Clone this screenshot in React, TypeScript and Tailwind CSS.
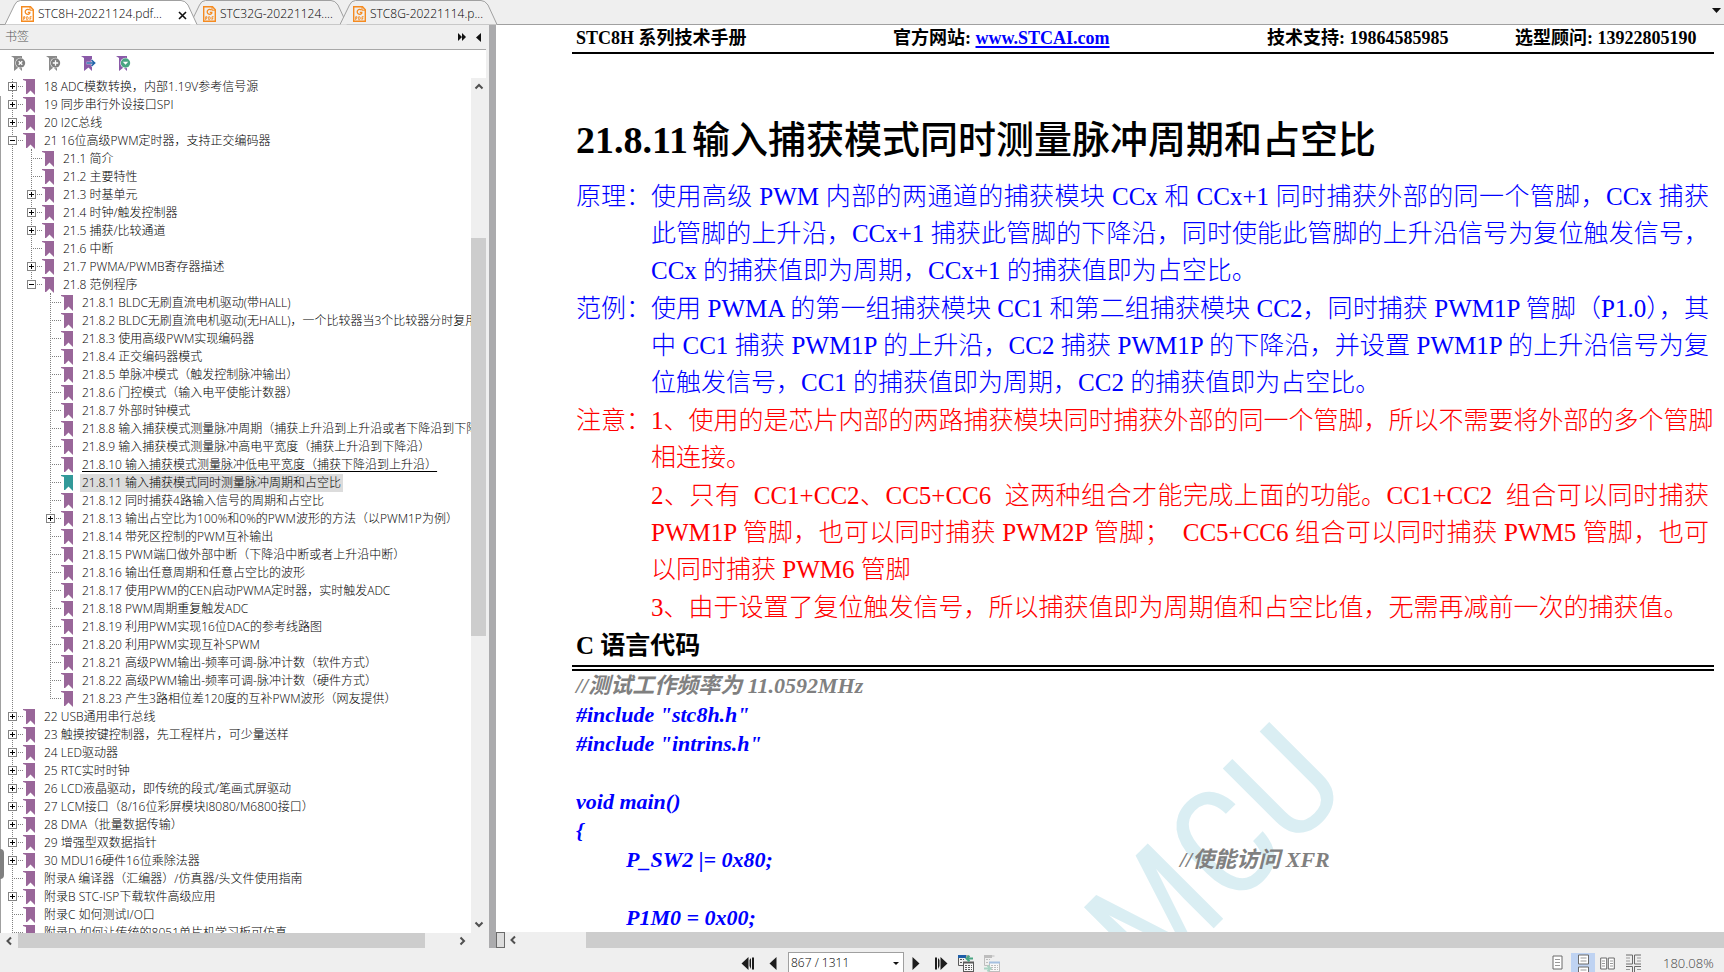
import { useState } from "react";
import clsx from "clsx";

type Bookmark = {
  title: string;
  level: number;
  toggle?: "plus" | "minus";
  state?: "active" | "hover";
  lastChild?: boolean;
};

const BOOKMARKS: Bookmark[] = [
  { title: "18 ADC模数转换，内部1.19V参考信号源", level: 0, toggle: "plus" },
  { title: "19 同步串行外设接口SPI", level: 0, toggle: "plus" },
  { title: "20 I2C总线", level: 0, toggle: "plus" },
  { title: "21 16位高级PWM定时器，支持正交编码器", level: 0, toggle: "minus" },
  { title: "21.1 简介", level: 1 },
  { title: "21.2 主要特性", level: 1 },
  { title: "21.3 时基单元", level: 1, toggle: "plus" },
  { title: "21.4 时钟/触发控制器", level: 1, toggle: "plus" },
  { title: "21.5 捕获/比较通道", level: 1, toggle: "plus" },
  { title: "21.6 中断", level: 1 },
  { title: "21.7 PWMA/PWMB寄存器描述", level: 1, toggle: "plus" },
  { title: "21.8 范例程序", level: 1, toggle: "minus", lastChild: true },
  { title: "21.8.1 BLDC无刷直流电机驱动(带HALL)", level: 2 },
  { title: "21.8.2 BLDC无刷直流电机驱动(无HALL)，一个比较器当3个比较器分时复用", level: 2 },
  { title: "21.8.3 使用高级PWM实现编码器", level: 2 },
  { title: "21.8.4 正交编码器模式", level: 2 },
  { title: "21.8.5 单脉冲模式（触发控制脉冲输出）", level: 2 },
  { title: "21.8.6 门控模式（输入电平使能计数器）", level: 2 },
  { title: "21.8.7 外部时钟模式", level: 2 },
  { title: "21.8.8 输入捕获模式测量脉冲周期（捕获上升沿到上升沿或者下降沿到下降沿）", level: 2 },
  { title: "21.8.9 输入捕获模式测量脉冲高电平宽度（捕获上升沿到下降沿）", level: 2 },
  { title: "21.8.10 输入捕获模式测量脉冲低电平宽度（捕获下降沿到上升沿）", level: 2, state: "hover" },
  { title: "21.8.11 输入捕获模式同时测量脉冲周期和占空比", level: 2, state: "active" },
  { title: "21.8.12 同时捕获4路输入信号的周期和占空比", level: 2 },
  { title: "21.8.13 输出占空比为100%和0%的PWM波形的方法（以PWM1P为例）", level: 2, toggle: "plus" },
  { title: "21.8.14 带死区控制的PWM互补输出", level: 2 },
  { title: "21.8.15 PWM端口做外部中断（下降沿中断或者上升沿中断）", level: 2 },
  { title: "21.8.16 输出任意周期和任意占空比的波形", level: 2 },
  { title: "21.8.17 使用PWM的CEN启动PWMA定时器，实时触发ADC", level: 2 },
  { title: "21.8.18 PWM周期重复触发ADC", level: 2 },
  { title: "21.8.19 利用PWM实现16位DAC的参考线路图", level: 2 },
  { title: "21.8.20 利用PWM实现互补SPWM", level: 2 },
  { title: "21.8.21 高级PWM输出-频率可调-脉冲计数（软件方式）", level: 2 },
  { title: "21.8.22 高级PWM输出-频率可调-脉冲计数（硬件方式）", level: 2 },
  { title: "21.8.23 产生3路相位差120度的互补PWM波形（网友提供）", level: 2, lastChild: true },
  { title: "22 USB通用串行总线", level: 0, toggle: "plus" },
  { title: "23 触摸按键控制器，先工程样片，可少量送样", level: 0, toggle: "plus" },
  { title: "24 LED驱动器", level: 0, toggle: "plus" },
  { title: "25 RTC实时时钟", level: 0, toggle: "plus" },
  { title: "26 LCD液晶驱动，即传统的段式/笔画式屏驱动", level: 0, toggle: "plus" },
  { title: "27 LCM接口（8/16位彩屏模块I8080/M6800接口）", level: 0, toggle: "plus" },
  { title: "28 DMA（批量数据传输）", level: 0, toggle: "plus" },
  { title: "29 增强型双数据指针", level: 0, toggle: "plus" },
  { title: "30 MDU16硬件16位乘除法器", level: 0, toggle: "plus" },
  { title: "附录A 编译器（汇编器）/仿真器/头文件使用指南", level: 0 },
  { title: "附录B STC-ISP下载软件高级应用", level: 0, toggle: "plus" },
  { title: "附录C 如何测试I/O口", level: 0 },
  { title: "附录D 如何让传统的8051单片机学习板可仿真", level: 0 },
];

const TABS = [
  { title: "STC8H-20221124.pdf...", active: true },
  { title: "STC32G-20221124....", active: false },
  { title: "STC8G-20221114.p...", active: false },
];

const NOTES = [
  {
    label: "原理：",
    color: "text-[#0000ff]",
    lines: [
      "使用高级 PWM 内部的两通道的捕获模块 CCx 和 CCx+1 同时捕获外部的同一个管脚，CCx 捕获",
      "此管脚的上升沿，CCx+1 捕获此管脚的下降沿，同时使能此管脚的上升沿信号为复位触发信号，",
      "CCx 的捕获值即为周期，CCx+1 的捕获值即为占空比。",
    ],
  },
  {
    label: "范例：",
    color: "text-[#0000ff]",
    lines: [
      "使用 PWMA 的第一组捕获模块 CC1 和第二组捕获模块 CC2，同时捕获 PWM1P 管脚（P1.0），其",
      "中 CC1 捕获 PWM1P 的上升沿，CC2 捕获 PWM1P 的下降沿，并设置 PWM1P 的上升沿信号为复",
      "位触发信号，CC1 的捕获值即为周期，CC2 的捕获值即为占空比。",
    ],
  },
  {
    label: "注意：",
    color: "text-[#ff0000]",
    lines: ["1、使用的是芯片内部的两路捕获模块同时捕获外部的同一个管脚，所以不需要将外部的多个管脚", "相连接。"],
  },
  {
    label: "",
    color: "text-[#ff0000]",
    lines: [
      "2、只有\u00a0 CC1+CC2、CC5+CC6\u00a0 这两种组合才能完成上面的功能。CC1+CC2\u00a0 组合可以同时捕获",
      "PWM1P 管脚，也可以同时捕获 PWM2P 管脚；\u00a0 CC5+CC6 组合可以同时捕获 PWM5 管脚，也可",
      "以同时捕获 PWM6 管脚",
    ],
  },
  {
    label: "",
    color: "text-[#ff0000]",
    lines: ["3、由于设置了复位触发信号，所以捕获值即为周期值和占空比值，无需再减前一次的捕获值。"],
  },
];

const CODE: { code?: string; comment?: string; indent?: boolean }[] = [
  { comment: "//测试工作频率为 11.0592MHz" },
  { code: '#include "stc8h.h"' },
  { code: '#include "intrins.h"' },
  {},
  { code: "void main()" },
  { code: "{" },
  { code: "P_SW2 |= 0x80;", comment: "//使能访问 XFR", indent: true },
  {},
  { code: "P1M0 = 0x00;", indent: true },
];

function Chevron({ dir }: { dir: "up" | "down" | "left" | "right" }) {
  const d = {
    up: "M1.5 7.5 5 4l3.500 3.500",
    down: "M1.500 3.500 5 7l3.500-3.500",
    left: "M7 1.500 3.500 5 7 8.500",
    right: "M3.500 1.500 7 5 3.500 8.500",
  }[dir];
  return (
    <svg viewBox="0 0 10 10" className="size-[10px]" fill="none" stroke="#505050" strokeWidth="2">
      <path d={d} />
    </svg>
  );
}

function PdfIcon() {
  return (
    <svg viewBox="0 0 13 16" className="h-4 w-[13px] shrink-0" fill="none" stroke="#f58a1f">
      <path d="M.7.7h8.800l2.800 3v11.600H.7z" strokeWidth="1.400" />
      <path d="M9 .5v3.700h3.500" strokeWidth="1" />
      <path d="M8.600 4.200A2.500 2.500 0 1 0 8.800 7.200V6.300H6.800" strokeWidth="1.300" />
      <path d="M2.700 14V10.700h1.200v1.600H2.700M5.700 10.700v3h.8c1 0 1-3 0-3zM9 14v-3.300h1.600M9 12.300h1.300" strokeWidth=".9" />
    </svg>
  );
}

function Tab({ title, active }: { title: string; active: boolean }) {
  const w = active ? 193 : 158;
  return (
    <div className={clsx("relative flex h-[25px] items-center", active ? "z-10 ml-[5px] w-[193px]" : "-ml-2 w-[158px]")}>
      <svg viewBox={`0 0 ${w} 25`} className="absolute inset-0 size-full" stroke="#a0a0a0">
        <path
          d={`M0 24.500 9.500 5Q11.500 .5 15.500 .5H${w - 17}Q${w - 13} .5 ${w - 10} 5L${w - 1} 24.500`}
          fill={active ? "#ffffff" : "#efefef"}
        />
      </svg>
      <button type="button" className={clsx("relative flex items-center gap-1 pt-1", active ? "pl-4" : "pl-[13px]")}>
        <PdfIcon />
        <span className="whitespace-nowrap leading-4">{title}</span>
      </button>
      {active && (
        <button type="button" aria-label="关闭" className="absolute right-[11px] top-[11px]">
          <svg viewBox="0 0 9 9" className="size-[9px]" stroke="#111" strokeWidth="1.600">
            <path d="M1 1l7 7M8 1 1 8" />
          </svg>
        </button>
      )}
    </div>
  );
}

/* Connector lines, expander box and ribbon in front of a bookmark */
function Gutter({ item, index }: { item: Bookmark; index: number }) {
  const { level, toggle, lastChild, state } = item;
  const w = 42 + level * 19;
  const x = 12 + level * 19;
  const open = toggle === "minus";
  return (
    <svg viewBox={`0 0 ${w} 18`} width={w} height={18} className="shrink-0" shapeRendering="crispEdges">
      <g stroke="#808080" strokeDasharray="1 1">
        {level > 0 && <path d="M12.500 0v18" />}
        <path d={`M${x + 0.5} ${index === 0 ? 1 : 0}V${lastChild ? 9 : 18}`} />
        <path d={`M${x} 8.500h${12}`} />
        {open && <path d={`M${x + 19.5} 17v2`} />}
      </g>
      {toggle && (
        <g>
          <rect x={x - 3.5} y="4.500" width="8" height="8" fill="#fff" stroke="#848484" />
          <path d={`M${x - 2} 8.500h5`} stroke="#000" />
          {!open && <path d={`M${x + 0.5} 6v5`} stroke="#000" />}
        </g>
      )}
      <path
        d={`M${x + 11} 1h12v16l-1-1-3.500-3.500-3.500 3.500h-1V3l-3-1z`}
        fill={state === "active" ? "#329999" : "#996699"}
        shapeRendering="auto"
      />
    </svg>
  );
}

function ToolIcon({ kind, label }: { kind: "close" | "add" | "goto" | "menu"; label: string }) {
  const gray = kind === "close" || kind === "add";
  return (
    <button type="button" aria-label={label}>
      <svg viewBox="0 0 15 17" className="h-[17px] w-[15px]">
        <path d="M0 1h11v15l-3.500-3.500L3 16V3L0 1z" fill={gray ? "#8a8a8a" : "#8a5aa8"} />
        {kind === "goto" ? (
          <path d="M5.500 8h8M10.500 4.500 14 8l-3.500 3.500" fill="none" stroke="#fff" strokeWidth="2.500" />
        ) : (
          <circle cx="9.500" cy="8" r="5.200" fill="#fff" />
        )}
        {kind === "goto" && <path d="M5.500 8h8M10.500 5 13.700 8l-3.200 3" fill="none" stroke="#1f62a8" strokeWidth="1.500" />}
        {gray && <circle cx="9.500" cy="8" r="4.700" fill="#808080" />}
        {kind === "close" && <path d="M7.700 6.200l3.600 3.600M11.300 6.200 7.700 9.800" stroke="#fff" strokeWidth="1.300" />}
        {kind === "add" && <path d="M9.500 5.300v5.400M6.800 8h5.400" stroke="#fff" strokeWidth="1.300" />}
        {kind === "menu" && (
          <>
            <circle cx="9.500" cy="8" r="4.700" fill="#4aa583" />
            <path d="M6.800 6.800h5.400L9.500 9.800z" fill="#fff" />
          </>
        )}
      </svg>
    </button>
  );
}

function Sidebar() {
  return (
    <aside className="flex w-[489px] shrink-0 flex-col">
      <div className="mr-[3px] flex h-[25px] items-center justify-between border-b border-[#a8a8a8] pl-[5px] pr-[5px] text-[#555]">
        <span>书签</span>
        <div className="flex items-center gap-[10px]">
          <button type="button" aria-label="展开">
            <svg viewBox="0 0 8 8" className="size-2" fill="#111">
              <path d="M0 0l4 4-4 4zM4 0l4 4-4 4z" />
            </svg>
          </button>
          <button type="button" aria-label="收起">
            <svg viewBox="0 0 5 9" className="h-[9px] w-[5px]" fill="#111">
              <path d="M5 0v9L0 4.500z" />
            </svg>
          </button>
        </div>
      </div>
      <div className="mr-[3px] flex h-7 items-center gap-5 bg-white pb-0.5 pl-[11px]">
        <ToolIcon kind="close" label="删除书签" />
        <ToolIcon kind="add" label="添加书签" />
        <ToolIcon kind="goto" label="转到书签" />
        <ToolIcon kind="menu" label="书签选项" />
      </div>
      <div className="relative mr-[3px] flex min-h-0 flex-1">
        <div className="min-w-0 flex-1 overflow-hidden bg-white">
          <ul>
            {BOOKMARKS.map((item, i) => (
              <li key={item.title} className="flex h-[18px]">
                <Gutter item={item} index={i} />
                <a
                  href="#"
                  className={clsx(
                    "whitespace-nowrap px-0.5 leading-[18px]",
                    item.state === "active" && "bg-[#dcdcdc]",
                    item.state === "hover" && "underline underline-offset-2",
                  )}
                >
                  {item.title}
                </a>
              </li>
            ))}
          </ul>
        </div>
        <div className="flex w-[15px] flex-col items-center">
          <button type="button" aria-label="向上" className="flex h-4 items-center">
            <Chevron dir="up" />
          </button>
          <div className="flex-[144]" />
          <div className="w-full flex-[398] bg-[#cdcdcd]" />
          <div className="flex-[279]" />
          <button type="button" aria-label="向下" className="flex h-[18px] items-center">
            <Chevron dir="down" />
          </button>
        </div>
        <div className="absolute bottom-0 left-0 top-[18px] w-px bg-[#a0a0a0]" />
        <div className="absolute bottom-[54px] left-0 h-[30px] w-1 rounded-r bg-[#808080]" />
      </div>
      <div className="mr-[18px] flex h-[15px] items-center">
        <button type="button" aria-label="向左" className="flex w-[18px] justify-center">
          <Chevron dir="left" />
        </button>
        <div className="h-full flex-[406] bg-[#cdcdcd]" />
        <div className="flex-[28]" />
        <button type="button" aria-label="向右" className="flex w-[18px] justify-center">
          <Chevron dir="right" />
        </button>
      </div>
    </aside>
  );
}

function Page() {
  return (
    <div className="relative min-h-0 flex-1 overflow-hidden bg-white font-['Liberation_Serif','Noto_Sans_CJK_SC',serif] text-black">
      <svg className="absolute inset-0 size-full" aria-hidden="true">
        <text
          transform="translate(855 766) rotate(-45)"
          textAnchor="end"
          fill="#daeef3"
          className="font-['Liberation_Sans_Narrow','Roboto_Condensed','Open_Sans_Condensed','DejaVu_Sans_Condensed',sans-serif] text-[150px] font-normal"
        >
          MCU
        </text>
      </svg>
      <div className="relative pl-[76px] pr-[10px]">
        <header className="flex h-[29px] items-center border-b-2 border-black pl-1 text-[18px] font-bold whitespace-nowrap">
          <span className="w-[317px]">STC8H 系列技术手册</span>
          <span className="w-[374px]">
            官方网站:{" "}
            <a href="#" className="text-[#0000ff] underline decoration-2 underline-offset-2">
              www.STCAI.com
            </a>
          </span>
          <span className="w-[248px]">技术支持: 19864585985</span>
          <span>选型顾问: 13922805190</span>
        </header>
        <h1 className="flex gap-1 pl-1 pt-[61px] text-[38px] font-bold leading-[50px] whitespace-nowrap">
          <span>21.8.11</span>
          <span className="font-medium">输入捕获模式同时测量脉冲周期和占空比</span>
        </h1>
        <div className="flex flex-col gap-px pl-1 pr-[5px] pt-[13px] text-[25px] font-light leading-[37px] whitespace-nowrap">
          {NOTES.map((note) => (
            <div key={note.lines[0]} className={clsx("flex", note.color)}>
              <div className="w-[75px] shrink-0">{note.label}</div>
              <div className="min-w-0 flex-1">
                {note.lines.map((line, i) => (
                  <p key={line} className={clsx(i < note.lines.length - 1 && "[text-align-last:justify]")}>
                    {line}
                  </p>
                ))}
              </div>
            </div>
          ))}
        </div>
        <h2 className="border-b-6 border-double border-black pl-1 text-[25px] font-bold leading-[39px]">C 语言代码</h2>
        <div className="pl-1 text-[22px] font-bold italic leading-[29px] whitespace-nowrap">
          {CODE.map((line, i) => (
            <div key={i} className="flex h-[29px]">
              {line.code && (
                <code className={clsx("font-[inherit] text-[#0000ff]", line.indent && "pl-[50px]", line.comment && "w-[604px]")}>
                  {line.code}
                </code>
              )}
              {line.comment && <span className="text-[#808080]">{line.comment}</span>}
            </div>
          ))}
        </div>
      </div>
    </div>
  );
}

function PageArrow({ label, d, w }: { label: string; d: string; w: number }) {
  return (
    <button type="button" aria-label={label}>
      <svg viewBox={`0 0 ${w} 13`} width={w} height={13} fill="#1c1c1c">
        <path d={d} />
      </svg>
    </button>
  );
}

function ViewIcon({ label, faded }: { label: string; faded?: boolean }) {
  const blue = faded ? "#a5c0e0" : "#1f5fa8";
  const green = faded ? "#a9d3c3" : "#4aa583";
  const gray = faded ? "#bdbdbd" : "#5a5a5a";
  return (
    <button type="button" aria-label={label}>
      <svg viewBox="0 0 16 17" className="h-[17px] w-4" fill="none">
        <path d="M.5 1v9.500h5M10.500 1H.5" stroke={gray} />
        <path d="M0 1.500h8" stroke={faded ? gray : blue} strokeWidth="3" />
        <path d="M2 4.500h4M2 7.500h3M12 4.500" stroke={gray} strokeDasharray="2 1" />
        <rect x="5.500" y="7.500" width="10" height="9" fill="#f8f8f8" stroke={gray} />
        <path d="M5 7.500h11" stroke={faded ? blue : gray} strokeWidth="2" />
        <path d="M7 10.500h7M7 12.500h7M7 14.500h7" stroke={gray} strokeDasharray="2 1" />
        {faded ? (
          <path d="M0 13.500h6M3.500 10.500l3 3-3 3" stroke={green} strokeWidth="2" />
        ) : (
          <path d="M15 3.500H9M11.500.8l-3 2.700 3 2.700" stroke={green} strokeWidth="2" />
        )}
      </svg>
    </button>
  );
}

function StatusBar() {
  const [page, setPage] = useState("867 / 1311");
  return (
    <footer className="flex h-6 shrink-0 items-center">
      <div className="ml-[741px] flex items-center pt-1.5">
        <PageArrow label="首页" w={14} d="M7.500 0v13L.5 6.500zM10 1v11L8.500 9V3zM11 .5h2v12h-2z" />
        <div className="w-[14px]" />
        <PageArrow label="上一页" w={8} d="M7.500 0v13L.5 6.500z" />
        <div className="ml-[11px] mr-2 flex h-[22px] w-[116px] items-center border border-[#a0a0a0] bg-white">
          <input
            aria-label="页码"
            value={page}
            onChange={(e) => setPage(e.target.value)}
            className="min-w-0 flex-1 bg-transparent pl-0.5 leading-4 outline-none"
          />
          <button type="button" aria-label="选择页码" className="px-1">
            <svg viewBox="0 0 6 3" className="h-[3px] w-[6px]" fill="#111">
              <path d="M0 0h6L3 3z" />
            </svg>
          </button>
        </div>
        <PageArrow label="下一页" w={8} d="M.5 0v13l7-6.500z" />
        <div className="w-[14px]" />
        <PageArrow label="末页" w={14} d="M6.500 0v13l7-6.500zM4 1v11l1.500-3V3zM1 .5h2v12H1z" />
        <div className="ml-2.5 flex gap-2.5">
          <ViewIcon label="后退视图" />
          <ViewIcon label="前进视图" faded />
        </div>
      </div>
      <div className="ml-auto flex h-full items-end text-[#444]">
        <button type="button" aria-label="单页" className="flex h-[19px] w-6 justify-center pt-0.5">
          <svg viewBox="0 0 11 15" className="h-[15px] w-[11px]" fill="#fff" stroke="#6a6a6a">
            <path d="M1 1h9v13H1z" />
            <path d="M3 4.500h5M3 7.500h5M3 10.500h5" stroke="#999" />
          </svg>
        </button>
        <button type="button" aria-label="连续" className="ml-0.5 flex h-[19px] w-6 justify-center bg-[#bfd3f2] pt-px">
          <svg viewBox="0 0 11 18" className="h-[18px] w-[11px]" fill="#fff" stroke="#6a6a6a">
            <path d="M.5 1h10v9H.5zM.5 18.500V13h10v5.500" />
            <path d="M2.500 4h6M2.500 7h6M2.500 16h6" stroke="#999" />
          </svg>
        </button>
        <button type="button" aria-label="双页" className="flex h-[19px] w-[25px] justify-center pt-1">
          <svg viewBox="0 0 15 13" className="h-[13px] w-[15px]" fill="#fff" stroke="#6a6a6a">
            <path d="M.7 1h6v11h-6zM8.300 1h6v11h-6z" />
            <path d="M2 4h3M2 6.500h3M2 9h3M10 4h3M10 6.500h3M10 9h3" stroke="#999" />
          </svg>
        </button>
        <button type="button" aria-label="双页连续" className="flex h-[19px] w-[27px] justify-center pt-px">
          <svg viewBox="0 0 15 18" className="h-[18px] w-[15px]" fill="none" stroke="#6a6a6a">
            <path d="M0 1h6.500v9H0M15 1H8.500v9H15M0 12.500h6.500V18M15 12.500H8.500V18" />
            <path d="M0 4h4M0 7h4M11 4h4M11 7h4M0 15.500h4M11 15.500h4" stroke="#999" />
          </svg>
        </button>
        <span className="ml-4 w-[61px] pb-0.5 text-[13px] leading-[14px]">180.08%</span>
      </div>
    </footer>
  );
}

export default function App() {
  return (
    <div className="flex h-screen flex-col overflow-hidden bg-[#efefef] font-['Open_Sans','Noto_Sans_CJK_SC',sans-serif] text-[12px] font-light text-black">
      <div className="flex h-[25px] shrink-0 items-center border-b border-[#a0a0a0]">
        {TABS.map((tab) => (
          <Tab key={tab.title} {...tab} />
        ))}
        <button type="button" aria-label="标签列表" className="mb-1 ml-auto mr-[3px]">
          <svg viewBox="0 0 9 5" className="h-[5px] w-[9px]" fill="#111">
            <path d="M0 0h9L4.500 5z" />
          </svg>
        </button>
      </div>
      <div className="flex min-h-0 flex-1">
        <Sidebar />
        <div className="flex w-[7px] shrink-0 items-center bg-[#ababad]">
          <div className="mb-[76px] ml-[3px] h-[44px] w-1 bg-[radial-gradient(#666_30%,transparent_35%)] bg-[length:2px_4px]" />
        </div>
        <main className="flex min-w-0 flex-1 flex-col">
          <Page />
          <div className="flex h-4 items-center">
            <div className="h-4 w-[9px] border border-[#6a6a6a] bg-[#dcdcdc]" />
            <button type="button" aria-label="向左" className="ml-[3px] flex w-[10px]">
              <Chevron dir="left" />
            </button>
            <div className="ml-[68px] h-full flex-1 bg-[#cdcdcd]" />
          </div>
        </main>
      </div>
      <StatusBar />
    </div>
  );
}
